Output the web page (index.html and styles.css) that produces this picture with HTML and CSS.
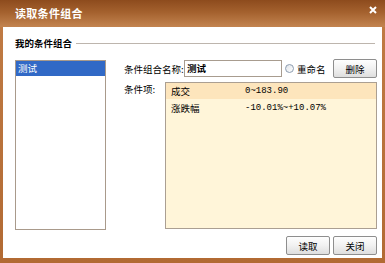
FILE: index.html
```html
<!DOCTYPE html>
<html lang="zh-CN">
<head>
    <meta charset="UTF-8">
    <title>读取条件组合</title>
    <link rel="stylesheet" href="styles.css">
</head>
<body>
    <div class="dialog">
        <div class="titlebar">
            <span class="titlebar__text">读取条件组合</span>
            <svg class="titlebar__close" width="8" height="8" viewBox="0 0 8 8">
                <path d="M1 1L7 7M7 1L1 7" stroke="#fff" stroke-width="2"/>
            </svg>
        </div>
        <div class="dialog__body">
            <div class="group-head">
                <span class="group-head__title">我的条件组合</span>
                <span class="group-head__line"></span>
            </div>
            <div class="group-main">
                <ul class="combo-list">
                    <li class="combo-list__item combo-list__item--active">测试</li>
                </ul>
                <div class="detail">
                    <div class="detail__row">
                        <span class="detail__label">条件组合名称:</span>
                        <div class="name-input">测试</div>
                        <span class="radio"></span>
                        <span class="radio__label">重命名</span>
                        <button class="btn btn--push">删除</button>
                    </div>
                    <div class="detail__row detail__row--top">
                        <span class="detail__label detail__label--items">条件项:</span>
                        <div class="cond-table">
                            <div class="cond-table__row cond-table__row--hl">
                                <span class="cond-table__name">成交</span>
                                <span class="cond-table__value">0~183.90</span>
                            </div>
                            <div class="cond-table__row">
                                <span class="cond-table__name">涨跌幅</span>
                                <span class="cond-table__value">-10.01%~+10.07%</span>
                            </div>
                        </div>
                    </div>
                </div>
            </div>
            <div class="footer">
                <button class="btn">读取</button>
                <button class="btn">关闭</button>
            </div>
        </div>
    </div>
</body>
</html>
```

FILE: styles.css
```css
* {
   margin: 0;
   padding: 0;
   box-sizing: border-box;
}

body {
   font-family: "Noto Sans CJK SC", "DejaVu Sans", sans-serif;
   font-size: 9.5px;
   color: #000;
   background: #fff;
}

.dialog {
   width: 385px;
   height: 263px;
   display: flex;
   flex-direction: column;
   background: linear-gradient(#c17c45, #b26a33);
}

/* title bar */
.titlebar {
   height: 27px;
   display: flex;
   align-items: center;
   justify-content: space-between;
   padding: 0 8px 1px 15px;
   background: linear-gradient(#8d4b1d, #a4612e 45%, #c38450);
   color: #fff;
}

.titlebar__text {
   font-size: 11px;
   font-weight: bold;
   letter-spacing: 0.3px;
}

.titlebar__close {
   margin-bottom: 6px;
}

.dialog__body {
   flex: 1;
   margin: 0 3px 5px;
   padding: 9px 5px 0 12px;
   background: #fff;
   display: flex;
   flex-direction: column;
}

/* group header */
.group-head {
   height: 14px;
   display: flex;
   align-items: center;
}

.group-head__title {
   font-weight: bold;
}

.group-head__line {
   flex: 1;
   height: 1px;
   margin: 1px 2px 0 4px;
   background: #bdb5ad;
}

.group-main {
   margin-top: 10px;
   display: flex;
}

/* left list */
.combo-list {
   list-style: none;
   width: 92px;
   height: 170px;
   border: 1px solid #a99a8b;
   background: #fff;
}

.combo-list__item {
   height: 15px;
   line-height: 15px;
   padding-left: 2px;
}

.combo-list__item--active {
   background: #3169c6;
   color: #fff;
}

/* right side */
.detail {
   flex: 1;
   margin-left: 18px;
   display: flex;
   flex-direction: column;
}

.detail__row {
   display: flex;
   align-items: center;
   margin-top: -1px;
}

.detail__row--top {
   align-items: flex-start;
   margin-top: 4px;
}

.detail__label {
   width: 60px;
   white-space: nowrap;
}

.detail__label--items {
   width: 41px;
   margin-top: 0;
}

.name-input {
   width: 98px;
   height: 17px;
   line-height: 15px;
   padding-left: 2px;
   border: 1px solid #a89c8f;
   font-weight: bold;
}

.radio {
   width: 9px;
   height: 9px;
   margin-left: 3px;
   border: 1px solid #8c9cb0;
   border-radius: 50%;
   background: linear-gradient(135deg, #dfe3e8, #fff);
}

.radio__label {
   margin-left: 3px;
}

.btn {
   width: 44px;
   height: 19px;
   font-family: inherit;
   font-size: 9.5px;
   color: #000;
   border: 1px solid #8e8e8e;
   border-radius: 2px;
   background: linear-gradient(#fefefe, #f1f1f1 50%, #dedede);
}

.btn--push {
   margin-left: auto;
}

/* condition table */
.cond-table {
   width: 212px;
   height: 147px;
   border: 1px solid #ab9f92;
   background: #fff5d9;
}

.cond-table__row {
   height: 16px;
   display: flex;
   align-items: center;
}

.cond-table__row + .cond-table__row {
   height: 17px;
}

.cond-table__row--hl {
   background: #fde5bc;
}

.cond-table__name {
   width: 79px;
   padding-left: 5px;
}

.cond-table__value {
   font-family: "Liberation Mono", "DejaVu Sans Mono", monospace;
   font-size: 9px;
}

/* bottom buttons */
.footer {
   margin-top: 6px;
   display: flex;
   justify-content: flex-end;
   gap: 3px;
}
```
